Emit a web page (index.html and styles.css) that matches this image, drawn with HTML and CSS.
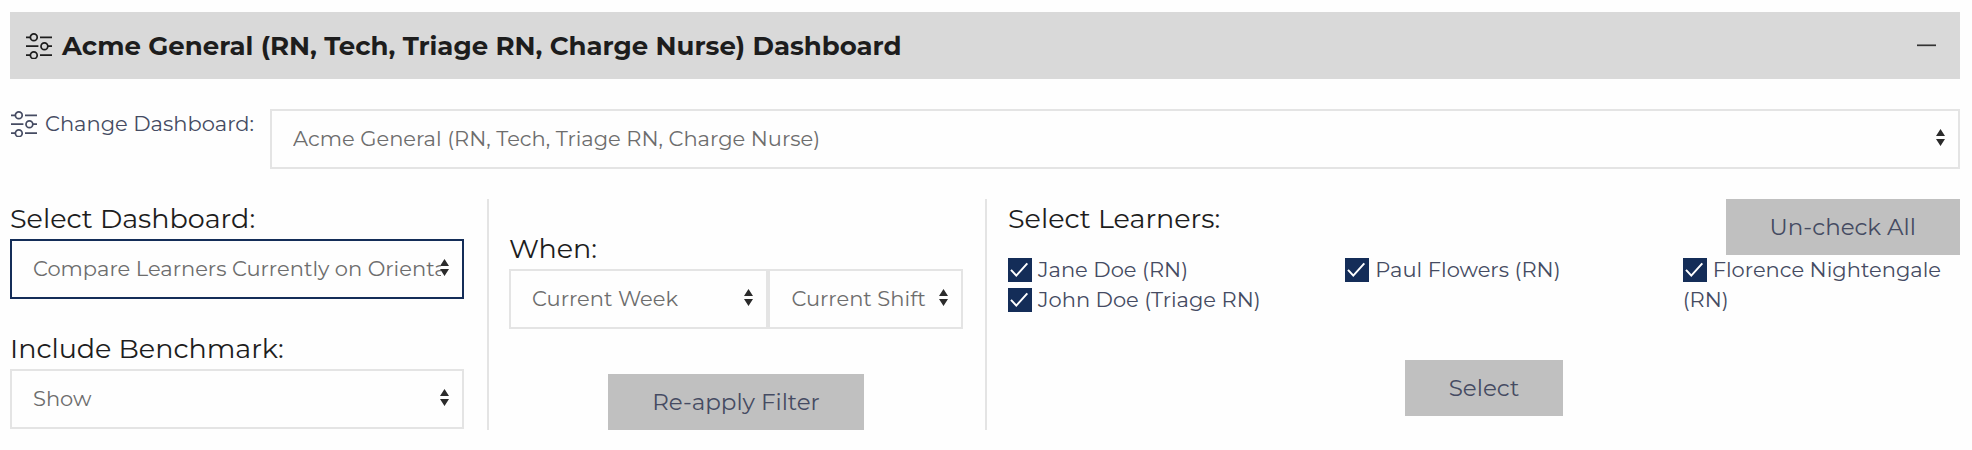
FILE: index.html
```
<!DOCTYPE html>
<html lang="en">

<head>
    <meta charset="UTF-8">
    <meta name="viewport" content="width=device-width, initial-scale=1.0">
    <title>Acme General Dashboard</title>
    <link rel="stylesheet" href="styles.css">
</head>

<body>
    <svg width="0" height="0" class="icon-sprite" aria-hidden="true">
        <symbol id="icon-sliders" viewBox="0 0 26 26">
            <g fill="none" stroke="currentColor" stroke-width="1.7">
                <path d="M0 4.3h4.2M14 4.3h12M0 13.2h12.4M22 13.2h4M0 22.2h4.2M14 22.2h12" />
                <circle cx="7.8" cy="4.3" r="3.4" />
                <circle cx="18.4" cy="13.2" r="3.4" />
                <circle cx="7.8" cy="22.2" r="3.4" />
            </g>
        </symbol>
    </svg>

    <header class="panel-header">
        <svg class="icon"><use href="#icon-sliders" /></svg>
        <h1>Acme General (RN, Tech, Triage RN, Charge Nurse) Dashboard</h1>
        <button type="button" class="collapse-btn" aria-label="Collapse">
            <svg width="20" height="20" viewBox="0 0 20 20"><path d="M0 9.3h19" stroke="currentColor" stroke-width="1.7" /></svg>
        </button>
    </header>

    <div class="change-row">
        <label for="change-dashboard">
            <svg class="icon"><use href="#icon-sliders" /></svg>
            Change Dashboard:
        </label>
        <select id="change-dashboard">
            <option>Acme General (RN, Tech, Triage RN, Charge Nurse)</option>
        </select>
    </div>

    <main class="filters">
        <section class="filter-col">
            <div class="field">
                <label for="select-dashboard">Select Dashboard:</label>
                <select id="select-dashboard" class="active">
                    <option>Compare Learners Currently on Orientation</option>
                </select>
            </div>
            <div class="field">
                <label for="benchmark">Include Benchmark:</label>
                <select id="benchmark">
                    <option>Show</option>
                    <option>Hide</option>
                </select>
            </div>
        </section>

        <section class="filter-col when-col">
            <div class="field">
                <label for="when">When:</label>
                <div class="select-group">
                    <select id="when">
                        <option>Current Week</option>
                    </select>
                    <select id="shift" aria-label="Shift">
                        <option>Current Shift</option>
                    </select>
                </div>
            </div>
            <button type="button" class="btn">Re-apply Filter</button>
        </section>

        <section class="filter-col learners-col">
            <div>
                <div class="learners-header">
                    <h2>Select Learners:</h2>
                    <button type="button" class="btn">Un-check All</button>
                </div>
                <div class="learners">
                    <div class="learner-list">
                        <label><input type="checkbox" checked>Jane Doe (RN)</label>
                        <label><input type="checkbox" checked>John Doe (Triage RN)</label>
                    </div>
                    <div class="learner-list">
                        <label><input type="checkbox" checked>Paul Flowers (RN)</label>
                    </div>
                    <div class="learner-list">
                        <label><input type="checkbox" checked>Florence Nightengale (RN)</label>
                    </div>
                </div>
            </div>
            <button type="button" class="btn">Select</button>
        </section>
    </main>
</body>

</html>
```
FILE: styles.css
```
* {
    box-sizing: border-box;
}

body {
    margin: 12px 12px 20px 10px;
    background-color: #fefefe;
    color: #454b62;
    font-family: Montserrat, Inter, sans-serif;
    font-size: 21px;
    line-height: 30px;
}

h1,
h2 {
    margin: 0;
    color: #1d1d1d;
}

button,
select {
    font: inherit;
}

.icon-sprite {
    position: absolute;
}

.icon {
    width: 26px;
    height: 26px;
    flex: none;
}

/* Title bar */
.panel-header {
    display: flex;
    align-items: center;
    gap: 10px;
    min-height: 67px;
    padding: 0 23px 0 16px;
    background-color: #d9d9d9;
    color: #1d1d1d;
}

.panel-header h1 {
    flex: 1;
    font-size: 26px;
    font-weight: 700;
    line-height: 36px;
}

.collapse-btn {
    display: flex;
    padding: 0;
    border: 0;
    background: none;
    color: #333;
    cursor: pointer;
}

/* Dashboard switcher */
.change-row {
    display: flex;
    align-items: flex-start;
    margin: 30px 0;
}

.change-row label {
    display: flex;
    align-items: center;
    gap: 8px;
    flex: 0 0 260px;
    padding-left: 1px;
    white-space: nowrap;
}

select {
    display: block;
    width: 100%;
    min-width: 0;
    height: 60px;
    padding: 0 21px;
    border: 2px solid #e4e4e4;
    border-radius: 0;
    appearance: none;
    background: #fefefe url("data:image/svg+xml,%3Csvg xmlns='http://www.w3.org/2000/svg' width='9' height='17'%3E%3Cpath d='M0 7L4.5 0L9 7zM0 10h9L4.5 17z' fill='%232b2b2b'/%3E%3C/svg%3E") no-repeat right 13px top 18px;
    color: #6d6d6d;
}

select.active {
    border-color: #142d58;
}

/* Filter columns */
.filters {
    display: grid;
    grid-template-columns: 477fr 498fr 975fr;
}

.filter-col {
    display: flex;
    flex-direction: column;
    gap: 30px;
    padding-right: 23px;
}

.filter-col + .filter-col {
    border-left: 2px solid #e4e4e4;
}

.field label,
.learners-header h2 {
    display: block;
    color: #1d1d1d;
    font-size: 27px;
    font-weight: 400;
    line-height: 40px;
}

.btn {
    align-self: center;
    height: 56px;
    padding: 0 44px;
    border: 0;
    background-color: #c0c0c0;
    color: #454b62;
    font-size: 23px;
    white-space: nowrap;
    cursor: pointer;
}

.when-col {
    gap: 45px;
    padding: 30px 22px 0 20px;
}

.select-group {
    display: grid;
    grid-template-columns: 4fr 3fr;
}

/* Learners */
.learners-col {
    gap: 45px;
    padding: 0 0 0 21px;
}

.learners-header {
    display: flex;
    justify-content: space-between;
    align-items: flex-start;
}

.learners {
    display: grid;
    grid-template-columns: repeat(3, 1fr);
    column-gap: 60px;
}

.learner-list label {
    display: block;
}

.learner-list input {
    width: 24px;
    height: 24px;
    margin: 0 6px 0 0;
    appearance: none;
    background-color: #142d58;
    vertical-align: -5px;
}

.learner-list input:checked {
    background-image: url("data:image/svg+xml,%3Csvg xmlns='http://www.w3.org/2000/svg' width='24' height='24'%3E%3Cpath d='M3 11.8L8.3 17.6L19.3 5.4' fill='none' stroke='white' stroke-width='2'/%3E%3C/svg%3E");
}
```
